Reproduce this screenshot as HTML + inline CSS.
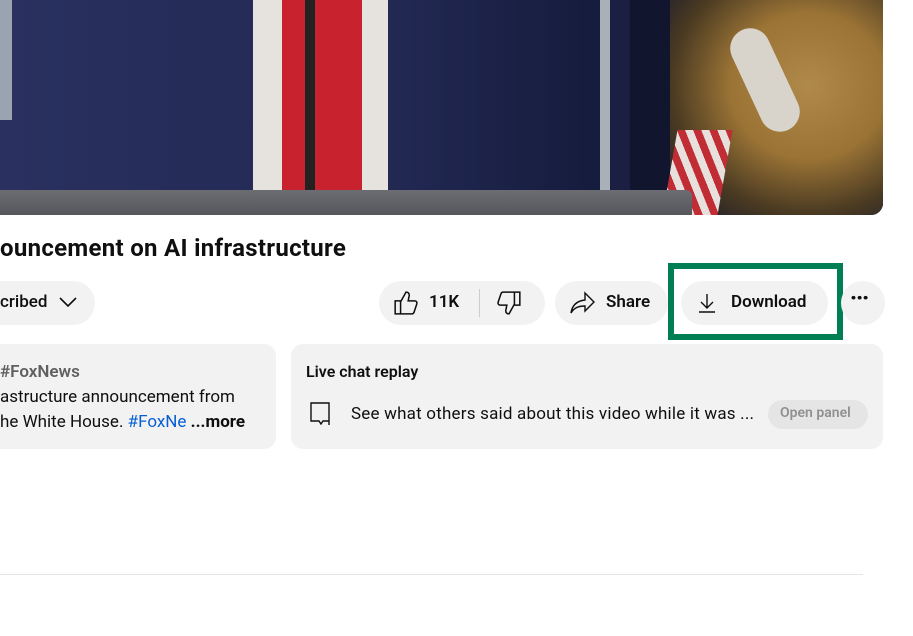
<!DOCTYPE html>
<html><head><meta charset="utf-8"><style>
body{margin:0;width:913px;height:636px;background:#fff;overflow:hidden;position:relative;font-family:"Roboto","Liberation Sans",Arial,sans-serif;color:#0f0f0f}
.a{position:absolute}
.pill{position:absolute;background:#f2f2f2;border-radius:22px;height:44px;top:281px}
.t{position:absolute;font-size:17px;font-weight:600;white-space:nowrap}
</style></head><body>
<div class="a" style="left:0;top:0;width:883px;height:215px;overflow:hidden;border-bottom-right-radius:12px;background:#1e2547">
 <div class="a" style="left:0;top:0;width:620px;height:215px;background:linear-gradient(90deg,#2a3160 0%,#252c58 30%,#232a55 60%,#141a3a 100%)"></div>
 <div class="a" style="left:0;top:0;width:12px;height:120px;background:#9aa3b0"></div>
 <div class="a" style="left:600px;top:0;width:40px;height:200px;background:#a9b0b8"></div>
 <div class="a" style="left:610px;top:0;width:273px;height:215px;background:#11152e"></div>
 <div class="a" style="left:670px;top:0;width:213px;height:215px;background:radial-gradient(ellipse at 65% 40%,#b08a4a 0%,#9a7335 40%,#4a3a22 70%,#11152e 100%)"></div>
 <div class="a" style="left:745px;top:25px;width:40px;height:110px;background:#d8d4cc;border-radius:20px;transform:rotate(-25deg)"></div>
 <div class="a" style="left:670px;top:130px;width:55px;height:85px;background:repeating-linear-gradient(60deg,#c02d35 0 7px,#e8e0dc 7px 14px);transform:skewX(-10deg)"></div>
 <div class="a" style="left:610px;top:0;width:20px;height:200px;background:#1b2042"></div>
 <div class="a" style="left:253px;top:0;width:135px;height:195px;background:#e6e3df"></div>
 <div class="a" style="left:282px;top:0;width:80px;height:195px;background:#c8222f"></div>
 <div class="a" style="left:305px;top:0;width:10px;height:195px;background:#222"></div>
 <div class="a" style="left:0;top:190px;width:692px;height:25px;background:linear-gradient(#6b6d72,#55575c);border-top-right-radius:6px"></div>
</div>
<div class="t" style="left:0;top:234px;font-size:24px;font-weight:700;letter-spacing:0.3px">ouncement on AI infrastructure</div>
<div class="pill" style="left:-40px;width:135px"></div>
<div class="t" style="left:0;top:292px;font-weight:500">cribed</div>
<svg class="a" style="left:58px;top:294px" width="20" height="16" viewBox="0 0 20 16"><path d="M2 4l8 8 8-8" fill="none" stroke="#0f0f0f" stroke-width="1.6"/></svg>
<div class="pill" style="left:379px;width:166px"></div>
<svg class="a" style="left:393px;top:290px" width="26" height="26" viewBox="0 0 24 24"><path d="M2 10h5v12H2zM7 11l5-9c2 0 3 1 3 3l-1 5h6c1.5 0 2.5 1.3 2 2.8l-2.5 7.5c-.3 1-1 1.7-2 1.7H7" fill="none" stroke="#0f0f0f" stroke-width="1.4"/></svg>
<div class="t" style="left:429px;top:292px">11K</div>
<div class="a" style="left:479px;top:289px;width:1px;height:28px;background:#ccc"></div>
<svg class="a" style="left:496px;top:290px" width="26" height="26" viewBox="0 0 24 24"><path d="M22 14h-5V2h5zM17 13l-5 9c-2 0-3-1-3-3l1-5H4c-1.5 0-2.5-1.3-2-2.8L4.5 3.7C4.8 2.7 5.5 2 6.5 2H17" fill="none" stroke="#0f0f0f" stroke-width="1.4"/></svg>
<div class="pill" style="left:555px;width:113px"></div>
<svg class="a" style="left:569px;top:290px" width="28" height="26" viewBox="0 0 28 26"><path d="M16 3l9 9-9 9v-5C9 16 5 18 2 23c1-7 5-12 14-13z" fill="none" stroke="#0f0f0f" stroke-width="1.4"/></svg>
<div class="t" style="left:606px;top:292px">Share</div>
<div class="pill" style="left:681px;width:147px"></div>
<svg class="a" style="left:697px;top:292px" width="20" height="22" viewBox="0 0 20 22"><path d="M10 2v14M4 10l6 6 6-6M2 20h16" fill="none" stroke="#0f0f0f" stroke-width="1.4"/></svg>
<div class="t" style="left:731px;top:292px">Download</div>
<div class="a" style="left:668px;top:263px;width:163px;height:65px;border:6px solid #007f54"></div>
<div class="a" style="left:841px;top:281px;width:44px;height:44px;border-radius:22px;background:#f2f2f2"></div>
<div class="t" style="left:850px;top:286px;font-size:22px;font-weight:900;letter-spacing:-1px">···</div>
<div class="a" style="left:-20px;top:344px;width:296px;height:105px;background:#f2f2f2;border-radius:12px"></div>
<div class="t" style="left:0;top:362px;color:#606060">#FoxNews</div>
<div class="t" style="left:0;top:387px;font-weight:400">astructure announcement from</div>
<div class="t" style="left:0;top:412px;font-weight:400">he White House. <span style="color:#065fd4">#FoxNe</span> <b>...more</b></div>
<div class="a" style="left:291px;top:344px;width:592px;height:105px;background:#f2f2f2;border-radius:12px"></div>
<div class="t" style="left:306px;top:362px;font-size:16px">Live chat replay</div>
<svg class="a" style="left:309px;top:401px" width="24" height="26" viewBox="0 0 24 26"><path d="M2 2h18v18H14l-2 3-2-3H2z M20 2v22" fill="none" stroke="#0f0f0f" stroke-width="1.4"/></svg>
<div class="t" style="left:351px;top:404px;font-weight:400;letter-spacing:0.2px">See what others said about this video while it was ...</div>
<div class="a" style="left:768px;top:400px;width:100px;height:29px;border-radius:15px;background:#e5e5e5"></div>
<div class="t" style="left:780px;top:405px;font-size:14px;color:#909090">Open panel</div>
<div class="a" style="left:0;top:574px;width:863px;height:1px;background:#e5e5e5"></div>
</body></html>
